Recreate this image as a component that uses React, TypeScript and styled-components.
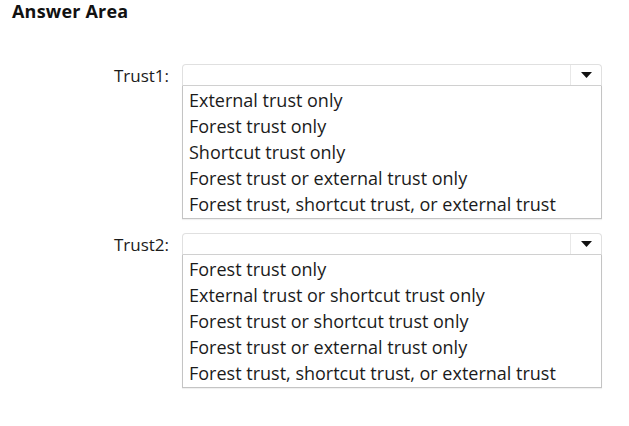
import React from "react";
import styled, { createGlobalStyle } from "styled-components";

const Global = createGlobalStyle`
  html, body { margin: 0; padding: 0; background: #ffffff; }
  body { font-family: "Open Sans", "Noto Sans", sans-serif; color: #1b1b1b; }
`;

const Page = styled.div`
  width: 629px;
  height: 426px;
  box-sizing: border-box;
  padding: 0 0 0 12px;
  background: #ffffff;
`;

const Title = styled.h1`
  margin: 0;
  font-family: "Open Sans", "Noto Sans", sans-serif;
  font-weight: 700;
  font-size: 18px;
  line-height: 22px;
  letter-spacing: 0.2px;
  color: #111;
`;

const Questions = styled.div`
  display: flex;
  flex-direction: column;
  gap: 14px;
  margin-top: 42px;
`;

const Row = styled.div`
  display: grid;
  grid-template-columns: 157px 420px;
  column-gap: 13px;
  align-items: start;
`;

const Label = styled.div`
  text-align: right;
  font-size: 17px;
  line-height: 22px;
  padding-top: 1px;
  color: #1b1b1b;
`;

const Dropdown = styled.div`
  display: flex;
  flex-direction: column;
`;

const Select = styled.div`
  display: flex;
  height: 20px;
  border: 1px solid #e0e0e0;
  border-bottom: 1px solid #d0d0d0;
  border-radius: 4px 4px 0 0;
  background: #fff;
`;

const SelectValue = styled.div`
  flex: 1;
`;

const Arrow = styled.div`
  width: 30px;
  display: flex;
  align-items: center;
  justify-content: center;
  border-left: 1px solid #e8e8e8;
`;

const List = styled.ul`
  margin: 0;
  padding: 1px 0 1px 6px;
  list-style: none;
  border: 1px solid #c4c4c4;
  border-top: none;
  box-shadow: 0 1px 1px rgba(0, 0, 0, 0.06);
`;

const Option = styled.li`
  font-size: 18px;
  line-height: 26px;
  color: #1b1b1b;
  white-space: nowrap;
`;

const questions = [
  {
    label: "Trust1:",
    options: [
      "External trust only",
      "Forest trust only",
      "Shortcut trust only",
      "Forest trust or external trust only",
      "Forest trust, shortcut trust, or external trust",
    ],
  },
  {
    label: "Trust2:",
    options: [
      "Forest trust only",
      "External trust or shortcut trust only",
      "Forest trust or shortcut trust only",
      "Forest trust or external trust only",
      "Forest trust, shortcut trust, or external trust",
    ],
  },
];

const Caret = () => (
  <svg width="11" height="6" viewBox="0 0 11 6">
    <path d="M0 0 H11 L5.5 6 Z" fill="#111" />
  </svg>
);

export default function App() {
  return (
    <Page>
      <Global />
      <Title>Answer Area</Title>
      <Questions>
        {questions.map((q) => (
          <Row key={q.label}>
            <Label>{q.label}</Label>
            <Dropdown>
              <Select>
                <SelectValue />
                <Arrow>
                  <Caret />
                </Arrow>
              </Select>
              <List>
                {q.options.map((o) => (
                  <Option key={o}>{o}</Option>
                ))}
              </List>
            </Dropdown>
          </Row>
        ))}
      </Questions>
    </Page>
  );
}
